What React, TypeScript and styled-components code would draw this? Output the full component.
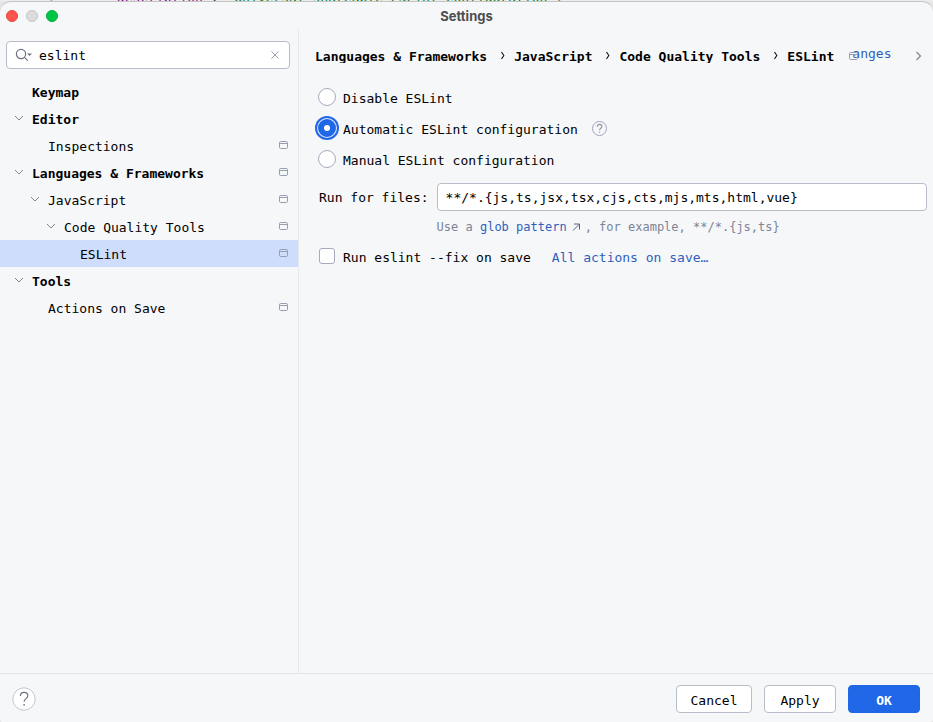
import React from 'react';
import styled, { createGlobalStyle, css } from 'styled-components';

const mono = '"DejaVu Sans Mono", monospace';
const ink = '#000';
const link = '#2e5fbd';
const muted = '#7d8396';
const line = '#b9bdc9';

const Global = createGlobalStyle`
  * { box-sizing: border-box; }
  html, body, #root { height: 100%; margin: 0; }
  body { background: #e4e4e4; color: ${ink}; font: 13px/16px ${mono}; overflow: hidden; }
  button, input { font: inherit; color: inherit; margin: 0; }
`;

const Screen = styled.div`
  display: flex;
  flex-direction: column;
  height: 100vh;
`;

const EditorStrip = styled.div`
  flex: none;
  display: flex;
  align-items: flex-end;
  height: 2px;
  padding-left: 46px;
  overflow: hidden;
  line-height: 8px;
  white-space: pre;
  background: #ececec;
`;

const LineNumber = styled.span`
  width: 63px;
  color: #8c93a6;
`;

const Key = styled.span`
  color: #871094;
`;

const Value = styled.span`
  color: #067d17;
`;

const Dialog = styled.main`
  flex: 1;
  min-height: 0;
  display: flex;
  flex-direction: column;
  margin-top: -1px;
  background: #f6f7f9;
  border-top: 1px solid #c4c4c4;
  border-radius: 11px 11px 3px 3px;
  overflow: hidden;
`;

const TitleBar = styled.header`
  flex: none;
  display: grid;
  grid-template-columns: 1fr auto 1fr;
  align-items: center;
  height: 28px;
  padding: 0 6px;
`;

const Lights = styled.div`
  display: flex;
  gap: 8px;
`;

const Light = styled.button<{ $fill: string; $edge: string }>`
  width: 12px;
  height: 12px;
  padding: 0;
  border: 1px solid ${(p) => p.$edge};
  border-radius: 50%;
  background: ${(p) => p.$fill};
`;

const Title = styled.h1`
  margin: 0;
  font: bold 13px/16px Inter, "Liberation Sans", sans-serif;
  color: #4d4d4d;
`;

const Body = styled.div`
  flex: 1;
  min-height: 0;
  display: grid;
  grid-template-columns: 299px 1fr;
`;

const Sidebar = styled.aside`
  padding-top: 11px;
  border-right: 1px solid #e6e7eb;
`;

const SearchBox = styled.label`
  display: flex;
  align-items: center;
  height: 28px;
  margin: 0 8px 9px 6px;
  padding: 0 8px;
  border: 1px solid ${line};
  border-radius: 4px;
  background: #fff;
`;

const SearchInput = styled.input`
  flex: 1;
  min-width: 0;
  padding: 2px 0 0 6px;
  border: 0;
  outline: 0;
  background: none;
`;

const IconButton = styled.button`
  display: flex;
  padding: 0;
  border: 0;
  background: none;
`;

const Tree = styled.ul`
  margin: 0;
  padding: 0;
  list-style: none;
`;

const TreeRow = styled.li<{ $depth: number; $bold?: boolean; $selected?: boolean }>`
  display: flex;
  align-items: center;
  height: 27px;
  padding: 0 10px 0 ${(p) => 12 + p.$depth * 16}px;
  font-weight: ${(p) => (p.$bold ? 700 : 400)};
  background: ${(p) => (p.$selected ? '#cdddfb' : 'transparent')};
`;

const Twisty = styled.span`
  display: flex;
  width: 20px;
  padding-bottom: 2px;
`;

const RowName = styled.span`
  flex: 1;
  padding-top: 2px;
`;

const RowMark = styled.span`
  display: flex;
  padding-bottom: 2px;
`;

const Content = styled.section`
  min-width: 0;
  padding: 14px 6px 0 16px;
`;

const Crumbs = styled.nav`
  display: flex;
  align-items: center;
  height: 24px;
  margin-bottom: 14px;
  font-weight: 700;
  white-space: nowrap;
`;

const CrumbText = styled.span`
  height: 14px;
  overflow: hidden;
`;

const CrumbArrow = styled.span`
  display: flex;
  justify-content: center;
  width: 27px;
  padding-left: 4px;
`;

const Revert = styled.a`
  position: relative;
  display: flex;
  height: 20px;
  margin-left: 18px;
  color: ${link};
  font-weight: 400;
  line-height: 16px;
  text-decoration: none;
`;

const RevertBadge = styled.span`
  position: absolute;
  left: -3px;
  top: 6px;
  display: flex;
`;

const Forward = styled(IconButton)`
  margin: 0 3px 0 auto;
`;

const Option = styled.div`
  display: flex;
  align-items: center;
  height: 31px;
  padding-left: 3px;
`;

const SaveOption = styled(Option)`
  gap: 17px;
  height: 34px;
  padding-left: 4px;
`;

const OptionLabel = styled.label`
  display: flex;
  align-items: center;
  gap: 7px;
  margin-right: 4px;
`;

const LabelText = styled.span`
  display: inline-block;
  padding-top: 3px;
`;

const control = css`
  appearance: none;
  flex: none;
  margin: 0;
  background: #fff;
  border: 1px solid #a6abbd;
`;

const Radio = styled.input`
  ${control}
  width: 18px;
  height: 18px;
  margin-bottom: 2px;
  border-radius: 50%;
  &:checked {
    border: 6px solid #2067e8;
    box-shadow: 0 0 0 1px #dfe9fb, 0 0 0 3px #2067e8;
  }
`;

const Check = styled.input`
  ${control}
  width: 16px;
  height: 16px;
  margin-right: 1px;
  border-radius: 3px;
`;

const HelpLink = styled(IconButton)`
  margin: 0 0 1px 10px;
`;

const Files = styled.div`
  display: grid;
  grid-template-columns: auto 1fr;
  column-gap: 8px;
  align-items: center;
  padding: 8px 0 4px 4px;
`;

const FilesLabel = styled.label`
  padding-top: 2px;
`;

const FilesInput = styled.input`
  width: 100%;
  min-width: 0;
  height: 28px;
  padding: 0 8px;
  border: 1px solid ${line};
  border-radius: 4px;
  background: #fff;
`;

const Hint = styled.p`
  grid-column: 2;
  display: flex;
  align-items: center;
  margin: 8px 0 0;
  font-size: 12px;
  color: ${muted};
  white-space: pre;
`;

const Link = styled.a`
  color: ${link};
  text-decoration: none;
`;

const Footer = styled.footer`
  flex: none;
  display: flex;
  align-items: center;
  gap: 12px;
  height: 49px;
  padding: 2px 13px 0 12px;
  border-top: 1px solid #e3e5e9;
`;

const HelpButton = styled(IconButton)`
  margin-right: auto;
`;

const Button = styled.button<{ $primary?: boolean; $wide?: boolean }>`
  height: 28px;
  width: ${(p) => (p.$wide ? 76 : 72)}px;
  padding: 3px 0 0;
  border: 1px solid ${(p) => (p.$primary ? '#2067e8' : line)};
  border-radius: 4px;
  color: ${(p) => (p.$primary ? '#fff' : ink)};
  background: ${(p) => (p.$primary ? '#2067e8' : '#fff')};
  font-weight: ${(p) => (p.$primary ? 700 : 400)};
`;

const Chevron = () => (
  <svg width="14" height="10" viewBox="0 0 14 10" fill="none" stroke="#7f8596">
    <path d="M3 3l4 4 4-4" />
  </svg>
);

const CrumbChevron = () => (
  <svg width="8" height="12" viewBox="0 0 8 12" fill="none" stroke="#111" strokeWidth="1.1">
    <path d="M2.5 2l2.3 3.5L2.5 9" />
  </svg>
);

const ProjectIcon = () => (
  <svg width="9" height="8" viewBox="0 0 9 8" fill="none" stroke="#989eb1">
    <rect x="0.5" y="0.5" width="8" height="7" rx="1.2" />
    <path d="M1 2.5h7" />
  </svg>
);

const SearchIcon = () => (
  <svg width="18" height="16" viewBox="0 0 18 16" fill="none" stroke="#6c7185" strokeWidth="1.2">
    <circle cx="6" cy="7" r="4.6" />
    <path d="M9.4 10.4l3.4 3.2" />
    <path d="M12 6.4h5l-2.5 2.6z" fill="#6c7185" stroke="none" />
  </svg>
);

const CloseIcon = () => (
  <svg width="12" height="12" viewBox="0 0 12 12" fill="none" stroke="#979db0">
    <path d="M2.4 2.4l7.2 7.2M9.6 2.4l-7.2 7.2" />
  </svg>
);

const HelpIcon = ({ size, fill, stroke, mark }: { size: number; fill: string; stroke: string; mark: string }) => (
  <svg width={size} height={size} viewBox="0 0 24 24" fill="none">
    <circle cx="12" cy="12" r="11.2" fill={fill} stroke={stroke} strokeWidth={24 / size} />
    <path d="M8.4 9c0-2.3 1.5-3.7 3.7-3.7s3.7 1.4 3.7 3.4c0 2.8-3.7 3-3.7 6" stroke={mark} strokeWidth={28 / size} />
    <circle cx="12.1" cy="17.8" r="0.9" fill={mark} />
  </svg>
);

const ExternalIcon = () => (
  <svg width="18" height="12" viewBox="0 0 18 12" fill="none" stroke="#5c6275">
    <path d="M6 9.5l6.500-6.500M7 3h5.500v5.500" />
  </svg>
);

const ForwardIcon = () => (
  <svg width="10" height="12" viewBox="0 0 10 12" fill="none" stroke="#7f8596" strokeWidth="1.2">
    <path d="M2.5 2l4 4-4 4" />
  </svg>
);

type Item = { name: string; depth: number; open?: boolean; bold?: boolean; project?: boolean; selected?: boolean };

const items: Item[] = [
  { name: 'Keymap', depth: 0, bold: true },
  { name: 'Editor', depth: 0, bold: true, open: true },
  { name: 'Inspections', depth: 1, project: true },
  { name: 'Languages & Frameworks', depth: 0, bold: true, open: true, project: true },
  { name: 'JavaScript', depth: 1, open: true, project: true },
  { name: 'Code Quality Tools', depth: 2, open: true, project: true },
  { name: 'ESLint', depth: 3, project: true, selected: true },
  { name: 'Tools', depth: 0, bold: true, open: true },
  { name: 'Actions on Save', depth: 1, project: true },
];

const crumbs = ['Languages & Frameworks', 'JavaScript', 'Code Quality Tools', 'ESLint'];

const modes = [
  { id: 'disable', text: 'Disable ESLint' },
  { id: 'auto', text: 'Automatic ESLint configuration', help: true },
  { id: 'manual', text: 'Manual ESLint configuration' },
];

export default function App() {
  return (
    <Screen>
      <Global />
      <EditorStrip aria-hidden="true">
        <LineNumber>4</LineNumber>
        <Key>"description"</Key>
        <span>: </span>
        <Value>"Universal shareable ESLint configuration"</Value>
        <span>,</span>
      </EditorStrip>
      <Dialog>
        <TitleBar>
          <Lights>
            <Light aria-label="Close" $fill="#ff5550" $edge="#e5443f" />
            <Light aria-label="Minimize" $fill="#dcdcdc" $edge="#c4c4c4" />
            <Light aria-label="Zoom" $fill="#00c546" $edge="#00ad3a" />
          </Lights>
          <Title>Settings</Title>
        </TitleBar>
        <Body>
          <Sidebar>
            <SearchBox>
              <SearchIcon />
              <SearchInput aria-label="Search settings" defaultValue="eslint" />
              <IconButton aria-label="Clear search">
                <CloseIcon />
              </IconButton>
            </SearchBox>
            <Tree>
              {items.map((it) => (
                <TreeRow key={it.name} $depth={it.depth} $bold={it.bold} $selected={it.selected}>
                  <Twisty>{it.open && <Chevron />}</Twisty>
                  <RowName>{it.name}</RowName>
                  {it.project && (
                    <RowMark>
                      <ProjectIcon />
                    </RowMark>
                  )}
                </TreeRow>
              ))}
            </Tree>
          </Sidebar>
          <Content>
            <Crumbs aria-label="Breadcrumb">
              {crumbs.map((c, i) => (
                <React.Fragment key={c}>
                  {i > 0 && (
                    <CrumbArrow>
                      <CrumbChevron />
                    </CrumbArrow>
                  )}
                  <CrumbText>{c}</CrumbText>
                </React.Fragment>
              ))}
              <Revert href="#">
                <RevertBadge>
                  <ProjectIcon />
                </RevertBadge>
                anges
              </Revert>
              <Forward aria-label="Forward">
                <ForwardIcon />
              </Forward>
            </Crumbs>
            {modes.map((m) => (
              <Option key={m.id}>
                <OptionLabel>
                  <Radio type="radio" name="mode" defaultChecked={m.id === 'auto'} />
                  <LabelText>{m.text}</LabelText>
                </OptionLabel>
                {m.help && (
                  <HelpLink aria-label="Help">
                    <HelpIcon size={15} fill="none" stroke="#a0a5b8" mark="#8f95a8" />
                  </HelpLink>
                )}
              </Option>
            ))}
            <Files>
              <FilesLabel htmlFor="files">Run for files:</FilesLabel>
              <FilesInput id="files" defaultValue="**/*.{js,ts,jsx,tsx,cjs,cts,mjs,mts,html,vue}" />
              <Hint>
                Use a <Link href="#">glob pattern</Link>
                <ExternalIcon />, for example, **/*.{'{'}js,ts{'}'}
              </Hint>
            </Files>
            <SaveOption>
              <OptionLabel>
                <Check type="checkbox" />
                <LabelText>Run eslint --fix on save</LabelText>
              </OptionLabel>
              <Link href="#">
                <LabelText>All actions on save…</LabelText>
              </Link>
            </SaveOption>
          </Content>
        </Body>
        <Footer>
          <HelpButton aria-label="Help">
            <HelpIcon size={24} fill="#fff" stroke="#c3c6d1" mark="#6c7185" />
          </HelpButton>
          <Button $wide>Cancel</Button>
          <Button>Apply</Button>
          <Button $primary>OK</Button>
        </Footer>
      </Dialog>
    </Screen>
  );
}
